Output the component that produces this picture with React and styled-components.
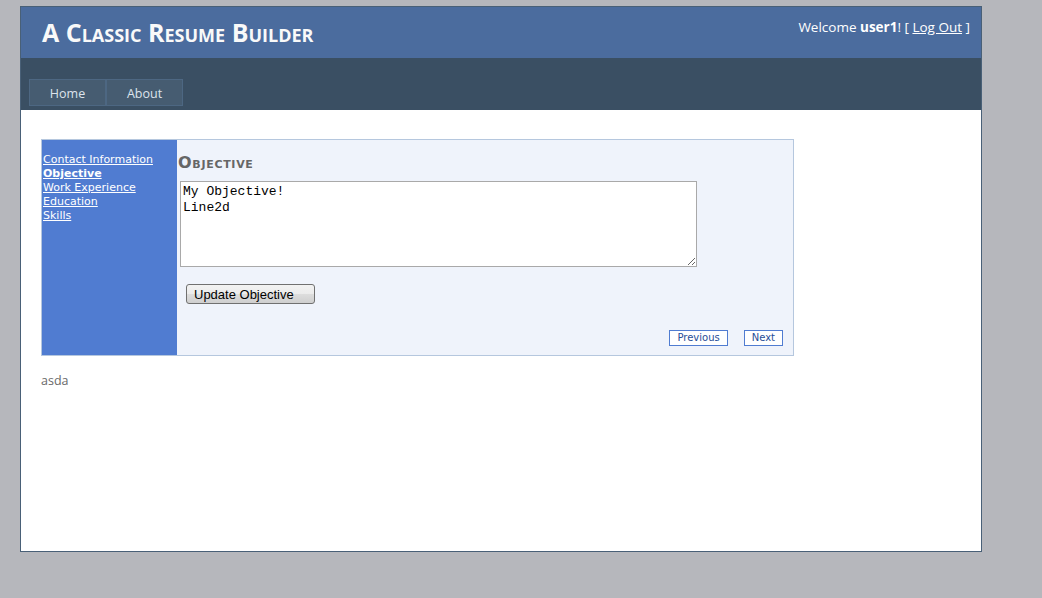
import React, { useState } from 'react';
import styled, { createGlobalStyle } from 'styled-components';

const GlobalStyle = createGlobalStyle`
  html, body {
    margin: 0;
    padding: 0;
    background: #b6b7bc;
    font-family: "Open Sans", "Noto Sans", sans-serif;
    font-size: 12.5px;
    color: #696969;
  }
`;

const Page = styled.div`
  width: 960px;
  margin: 6px 0 0 20px;
  background: #fff;
  border: 1px solid #496077;
`;

const Header = styled.div`
  display: flex;
  justify-content: space-between;
  align-items: flex-start;
  background: #4b6c9e;
  height: 51px;
`;

const Title = styled.h1`
  margin: 0;
  padding: 0 0 0 21px;
  font-size: 25px;
  line-height: 51px;
  font-weight: 700;
  font-variant: small-caps;
  color: #f9f9f9;
`;

const Login = styled.div`
  padding: 10px 11px 0 0;
  font-size: 13.5px;
  line-height: 20px;
  color: #fff;

  a {
    color: #fff;
  }
`;

const NavBar = styled.div`
  display: flex;
  background: #3a4f63;
  padding: 21px 0 4px 8px;
`;

const MenuItem = styled.a`
  box-sizing: border-box;
  width: ${p => p.$w}px;
  height: 27px;
  line-height: 27px;
  text-align: center;
  background: #465c71;
  border: 1px solid #4d6782;
  color: #dde4ec;
  text-decoration: none;
  font-size: 12.5px;
`;

const Main = styled.div`
  box-sizing: border-box;
  height: 441px;
  padding: 29px 20px 0 20px;
`;

const Wizard = styled.div`
  display: flex;
  width: 753px;
  height: 217px;
  box-sizing: border-box;
  background: #eff3fb;
  border: 1px solid #b5c7de;
  font-family: "DejaVu Sans", Verdana, sans-serif;
`;

const SideBar = styled.div`
  width: 135px;
  flex: none;
  background: #507cd1;
  padding: 13px 0 0 1px;
  box-sizing: border-box;
  display: flex;
  flex-direction: column;
`;

const SideLink = styled.a`
  color: #fff;
  font-size: 11px;
  line-height: 14px;
  text-decoration: underline;
  font-weight: ${p => (p.$active ? 700 : 400)};
  cursor: pointer;
`;

const Step = styled.div`
  flex: 1;
  display: flex;
  flex-direction: column;
  padding: 13px 10px 9px 1px;
`;

const StepTitle = styled.h2`
  margin: 0 0 8px 0;
  font-family: "DejaVu Sans", Verdana, sans-serif;
  font-size: 16px;
  line-height: 20px;
  font-weight: 700;
  font-variant: small-caps;
  letter-spacing: 0.7px;
  color: #666;
`;

const TextArea = styled.textarea`
  width: 517px;
  height: 86px;
  box-sizing: border-box;
  margin: 0 0 0 2px;
  padding: 2px;
  border: 1px solid #a9a9a9;
  background: #fff;
  font-family: "Liberation Mono", monospace;
  font-size: 13px;
  line-height: 16px;
  color: #000;
  outline: none;
`;

const Button = styled.button`
  width: 129px;
  height: 20px;
  margin: 17px 0 0 8px;
  padding: 0 0 0 7px;
  text-align: left;
  font-family: "Liberation Sans", Arial, sans-serif;
  font-size: 13px;
  color: #000;
  border: 1px solid #707070;
  border-radius: 3px;
  background: linear-gradient(#f2f2f2 0%, #ebebeb 50%, #dddddd 50%, #cfcfcf 100%);
`;

const NavButtons = styled.div`
  margin-top: auto;
  display: flex;
  justify-content: flex-end;
  gap: 16px;
`;

const NavButton = styled.button`
  height: 16px;
  padding: 0 7px;
  background: #fff;
  border: 1px solid #507cd1;
  color: #284e98;
  font-family: "DejaVu Sans", Verdana, sans-serif;
  font-size: 10px;
  line-height: 14px;
`;

const Note = styled.p`
  margin: 16px 0 0 0;
  font-size: 12.5px;
  color: #696969;
`;

const steps = ['Contact Information', 'Objective', 'Work Experience', 'Education', 'Skills'];

export default function App() {
  const [text, setText] = useState('My Objective!\nLine2d');

  return (
    <>
      <GlobalStyle />
      <Page>
        <Header>
          <Title>A Classic Resume Builder</Title>
          <Login>
            Welcome <b>user1</b>! [ <a href="#">Log Out</a> ]
          </Login>
        </Header>
        <NavBar>
          <MenuItem href="#" $w={77}>Home</MenuItem>
          <MenuItem href="#" $w={77}>About</MenuItem>
        </NavBar>
        <Main>
          <Wizard>
            <SideBar>
              {steps.map(s => (
                <SideLink key={s} $active={s === 'Objective'}>{s}</SideLink>
              ))}
            </SideBar>
            <Step>
              <StepTitle>Objective</StepTitle>
              <TextArea value={text} onChange={e => setText(e.target.value)} />
              <div>
                <Button>Update Objective</Button>
              </div>
              <NavButtons>
                <NavButton>Previous</NavButton>
                <NavButton>Next</NavButton>
              </NavButtons>
            </Step>
          </Wizard>
          <Note>asda</Note>
        </Main>
      </Page>
    </>
  );
}
